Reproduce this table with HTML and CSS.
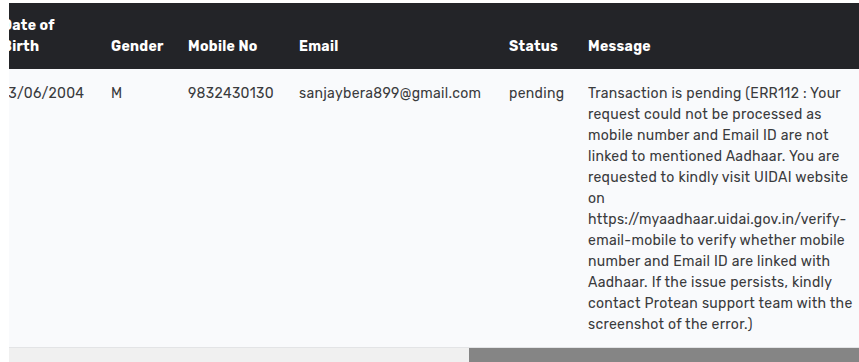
FILE: index.html
```html
<!DOCTYPE html>
<html lang="en">
<head>
    <meta charset="UTF-8">
    <meta name="viewport" content="width=device-width, initial-scale=1.0">
    <title>Transaction Status</title>
    <link rel="stylesheet" href="styles.css">
</head>
<body>
    <div class="table-box">
        <div class="table-wrap" id="tableWrap">
            <table class="status-table">
                <colgroup>
                    <col style="width: 70px">
                    <col style="width: 220px">
                    <col style="width: 200px">
                    <col style="width: 200px">
                    <col style="width: 160px">
                    <col style="width: 134px">
                    <col class="col-dob">
                    <col class="col-gender">
                    <col class="col-mobile">
                    <col class="col-email">
                    <col class="col-status">
                    <col class="col-message">
                </colgroup>
                <thead>
                    <tr>
                        <th>Sr. No</th>
                        <th>Acknowledgement No</th>
                        <th>Applicant Name</th>
                        <th>Father's Name</th>
                        <th>Aadhaar No</th>
                        <th>PAN</th>
                        <th>Date of Birth</th>
                        <th>Gender</th>
                        <th>Mobile No</th>
                        <th>Email</th>
                        <th>Status</th>
                        <th>Message</th>
                    </tr>
                </thead>
                <tbody>
                    <tr>
                        <td>1</td>
                        <td>881014700283516</td>
                        <td>SANJAY BERA</td>
                        <td>GOUTAM BERA</td>
                        <td>XXXXXXXX4172</td>
                        <td>-</td>
                        <td class="nowrap">13/06/2004</td>
                        <td>M</td>
                        <td>9832430130</td>
                        <td>sanjaybera899@gmail.com</td>
                        <td>pending</td>
                        <td class="message">Transaction is pending (ERR112 : Your request could not be processed as mobile number and Email ID are not linked to mentioned Aadhaar. You are requested to kindly visit UIDAI website on https://myaadhaar.uidai.gov.in/verify-email-mobile to verify whether mobile number and Email ID are linked with Aadhaar. If the issue persists, kindly contact Protean support team with the screenshot of the error.)</td>
                    </tr>
                </tbody>
            </table>
        </div>
        <!-- полоса прокрутки -->
        <div class="scrollbar">
            <div class="scroll-track"></div>
            <div class="scroll-thumb" id="scrollThumb"></div>
        </div>
    </div>

    <script>
        // показываем последние колонки (статус и сообщение)
        const wrap = document.getElementById('tableWrap');
        wrap.scrollLeft = wrap.scrollWidth;

        const thumb = document.getElementById('scrollThumb');
        thumb.style.width = Math.round(wrap.clientWidth * wrap.clientWidth / wrap.scrollWidth) + 'px';
    </script>
</body>
</html>
```

FILE: styles.css
```css
body {
    font-family: 'Rubik', 'Open Sans', sans-serif;
    background-color: #ffffff;
    color: #3a3b3d;
    margin: 0;
    padding: 3px 0 0 9px;
}

.table-box {
    width: 850px;
}

.table-wrap {
    overflow: hidden;
}

.scrollbar {
    display: flex;
    height: 15px;
}

.scroll-track {
    flex: 1;
    background-color: #f0f0f0;
}

.scroll-thumb {
    background-color: #858585;
}

.status-table {
    table-layout: fixed;
    width: 1853px;
    border-collapse: collapse;
    font-size: 14px;
    line-height: 21px;
    letter-spacing: 0.3px;
}

.col-dob { width: 109px; }
.col-gender { width: 77px; }
.col-mobile { width: 111px; }
.col-email { width: 210px; }
.col-status { width: 79px; }
.col-message { width: 283px; }

.status-table th {
    background-color: #232428;
    color: #ffffff;
    font-weight: 700;
    text-align: left;
    vertical-align: bottom;
    padding: 12px;
}

.status-table td {
    background-color: #f9fafc;
    vertical-align: top;
    padding: 14px 12px 12px;
    border-bottom: 1px solid #e3e4e6;
}

.status-table td.nowrap {
    white-space: nowrap;
}

.status-table td.message {
    padding-right: 5px;
}
```
